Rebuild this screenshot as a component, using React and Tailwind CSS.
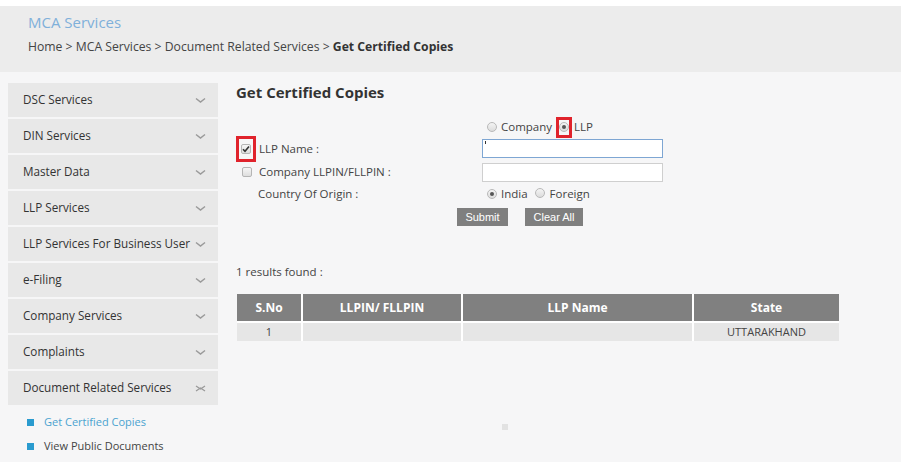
import React from "react";

const menu = [
  "DSC Services",
  "DIN Services",
  "Master Data",
  "LLP Services",
  "LLP Services For Business User",
  "e-Filing",
  "Company Services",
  "Complaints",
];

const Chevron = ({ open }) => (
  <svg width="11" height="7" viewBox="0 0 11 7" className="shrink-0">
    {open ? (
      <>
        <path d="M1 1 L5.5 4 L10 1" fill="none" stroke="#9a9a9a" strokeWidth="1.3" />
        <path d="M1 6 L5.5 3 L10 6" fill="none" stroke="#9a9a9a" strokeWidth="1.3" />
      </>
    ) : (
      <path d="M1 1.5 L5.5 5 L10 1.5" fill="none" stroke="#9a9a9a" strokeWidth="1.5" />
    )}
  </svg>
);

const Radio = ({ checked }) => (
  <span className="inline-flex w-[10px] h-[10px] rounded-full border border-[#b9b9b9] bg-gradient-to-b from-[#f4f4f4] to-[#dcdcdc] items-center justify-center shrink-0">
    {checked && <span className="w-[4px] h-[4px] rounded-full bg-[#555]" />}
  </span>
);

const Check = ({ checked }) => (
  <span className="inline-flex w-[10px] h-[10px] rounded-[2px] border border-[#b5b5b5] bg-gradient-to-b from-[#f6f6f6] to-[#dedede] items-center justify-center shrink-0">
    {checked && (
      <svg width="8" height="8" viewBox="0 0 8 8">
        <path d="M1 4.2 L3 6.2 L7 1.5" fill="none" stroke="#333" strokeWidth="1.6" />
      </svg>
    )}
  </span>
);

const App = () => {
  return (
    <div
      className="w-[907px] h-[475px] bg-white pt-[6px] text-[#3a3a3a] overflow-hidden"
      style={{ fontFamily: '"Open Sans", "Noto Sans", sans-serif' }}
    >
      {/* header */}
      <div className="h-[66px] mr-[6px] bg-[#ececec] pl-[28px] pt-[5px]">
        <div className="text-[15px] leading-[22px] text-[#7fb0da]">MCA Services</div>
        <div className="text-[12.2px] leading-[18px] text-[#444] mt-[5px]">
          Home &gt; MCA Services &gt; Document Related Services &gt;{" "}
          <span className="font-bold text-[#333]">Get Certified Copies</span>
        </div>
      </div>

      <div className="h-[390px] mr-[6px] bg-[#f6f6f7] flex">
        {/* sidebar */}
        <div className="w-[210px] ml-[8px] pt-[11px] flex flex-col gap-[2px] shrink-0">
          {menu.map((m) => (
            <div
              key={m}
              className="h-[34px] bg-[#e8e8e8] flex items-center justify-between pl-[15px] pr-[12px] text-[11.7px] text-[#333] whitespace-nowrap"
            >
              <span>{m}</span>
              <Chevron />
            </div>
          ))}
          <div className="h-[34px] bg-[#e8e8e8] flex items-center justify-between pl-[15px] pr-[12px] text-[11.7px] text-[#333]">
            <span>Document Related Services</span>
            <Chevron open />
          </div>
          <div className="flex flex-col pt-[3px] text-[11px]">
            <div className="h-[24px] flex items-center pl-[19px] gap-[10px]">
              <span className="w-[7px] h-[7px] bg-[#2a9bcf]" />
              <span className="text-[#4aa3d0]">Get Certified Copies</span>
            </div>
            <div className="h-[24px] flex items-center pl-[19px] gap-[10px]">
              <span className="w-[7px] h-[7px] bg-[#2a9bcf]" />
              <span className="text-[#444]">View Public Documents</span>
            </div>
          </div>
        </div>

        {/* main */}
        <div className="flex-1 pl-[18px] pt-[9px] relative">
          <h1 className="text-[15px] font-bold leading-[22px] text-[#333]">Get Certified Copies</h1>

          <div className="mt-[14px] flex items-center h-[20px] pl-[251px] text-[11.5px] text-[#444]">
            <Radio />
            <span className="ml-[4px]">Company</span>
            <span className="ml-[4px] border-[3px] border-[#e0232c] w-[16px] h-[21px] flex items-center justify-center">
              <Radio checked />
            </span>
            <span className="ml-[2px]">LLP</span>
          </div>

          <div className="grid grid-cols-[246px_181px] text-[11.5px] text-[#444]">
            <div className="h-[23px] flex items-center relative">
              <span className="border-[3px] border-[#e0232c] w-[20px] h-[26px] flex items-center justify-center">
                <Check checked />
              </span>
              <span className="ml-[3px]">LLP Name :</span>
            </div>
            <div className="h-[23px] flex items-center">
              <div className="w-[181px] h-[19px] bg-white border border-[#7ea6d3] relative">
                <span className="absolute left-[2px] top-[1px] w-px h-[3px] bg-[#333]" />
              </div>
            </div>

            <div className="h-[24px] flex items-center pl-[6px]">
              <Check />
              <span className="ml-[7px]">Company LLPIN/FLLPIN :</span>
            </div>
            <div className="h-[24px] flex items-center">
              <div className="w-[181px] h-[19px] bg-white border border-[#cfcfcf]" />
            </div>

            <div className="h-[20px] flex items-center pl-[22px]">Country Of Origin :</div>
            <div className="h-[20px] flex items-center pl-[5px]">
              <Radio checked />
              <span className="ml-[4px]">India</span>
              <span className="ml-[7px]">
                <Radio />
              </span>
              <span className="ml-[5px]">Foreign</span>
            </div>
          </div>

          <div className="flex gap-[17px] pl-[221px] mt-[4px]">
            <button
              className="w-[51px] h-[18px] bg-[#7f7f7f] text-white text-[11px] leading-[18px]"
              style={{ fontFamily: '"Liberation Sans", Arial, sans-serif' }}
            >
              Submit
            </button>
            <button
              className="w-[58px] h-[18px] bg-[#7f7f7f] text-white text-[11px] leading-[18px]"
              style={{ fontFamily: '"Liberation Sans", Arial, sans-serif' }}
            >
              Clear All
            </button>
          </div>

          <div className="mt-[38px] text-[11.5px] text-[#444] leading-[16px]">1 results found :</div>

          <div className="mt-[14px] ml-[1px] w-[602px] bg-white grid grid-cols-[64px_158px_229px_145px] gap-[2px] text-[12px]">
            <div className="h-[27px] bg-[#808080] text-white font-bold flex items-center justify-center">S.No</div>
            <div className="h-[27px] bg-[#808080] text-white font-bold flex items-center justify-center">LLPIN/ FLLPIN</div>
            <div className="h-[27px] bg-[#808080] text-white font-bold flex items-center justify-center">LLP Name</div>
            <div className="h-[27px] bg-[#808080] text-white font-bold flex items-center justify-center">State</div>
            <div className="h-[18px] bg-[#e6e6e6] text-[#444] text-[11px] flex items-center justify-center">1</div>
            <div className="h-[18px] bg-[#e6e6e6]" />
            <div className="h-[18px] bg-[#e6e6e6]" />
            <div className="h-[18px] bg-[#e6e6e6] text-[#444] text-[11px] flex items-center justify-center">UTTARAKHAND</div>
          </div>

          <span className="absolute left-[284px] top-[352px] w-[6px] h-[6px] bg-[#e2e2e2]" />
        </div>
      </div>
    </div>
  );
};

export default App;
